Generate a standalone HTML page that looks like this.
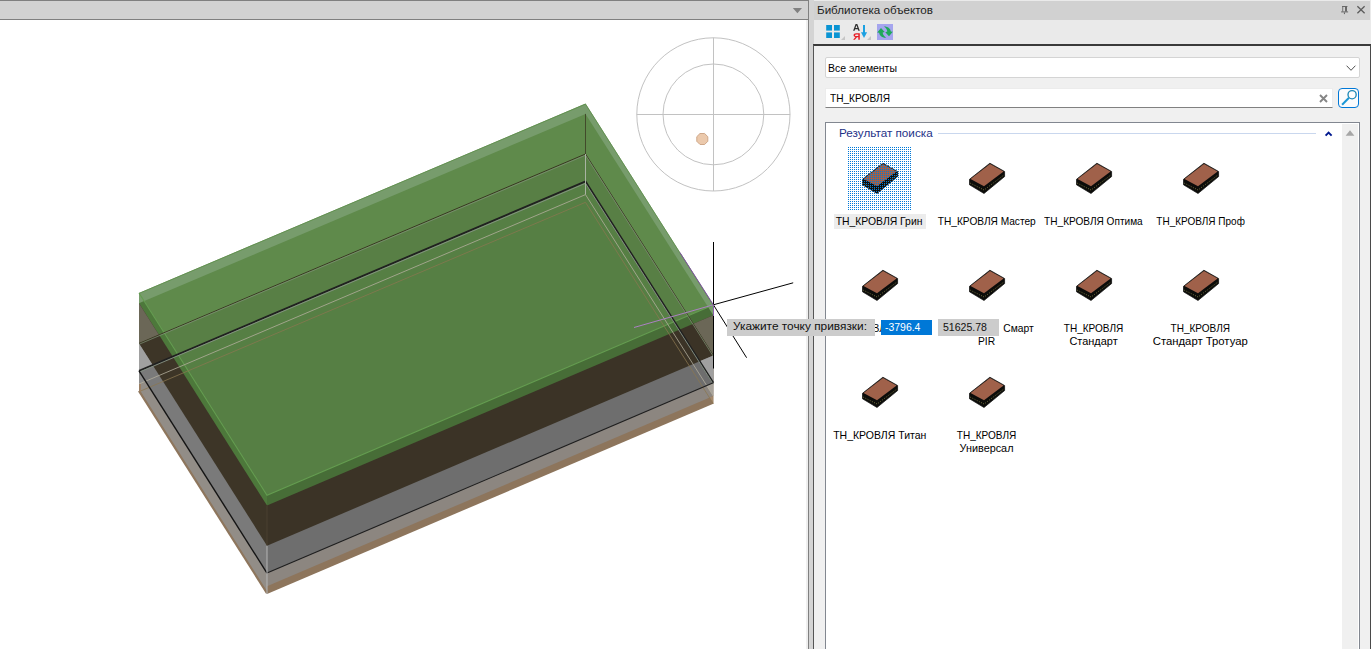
<!DOCTYPE html>
<html><head><meta charset="utf-8"><title>UI</title>
<style>
html,body{margin:0;padding:0;}
body{width:1371px;height:649px;overflow:hidden;background:#fff;position:relative;font-family:"Liberation Sans",sans-serif;color:#000;}
.abs{position:absolute;}
#vp{position:absolute;left:0;top:0;width:809px;height:649px;background:#fff;overflow:hidden;}
#vpbar{position:absolute;left:0;top:0;width:808px;height:20px;background:#d2d2d2;border-top:1px solid #808080;border-bottom:1px solid #808080;box-sizing:border-box;}
#split{position:absolute;left:806px;top:0;width:8px;height:649px;}
#panel{position:absolute;left:814px;top:0;width:557px;height:649px;background:#eaeaea;}
#ptitle{position:absolute;left:0;top:1px;width:556px;height:19px;background:#d1d1d1;}
.t{position:absolute;white-space:nowrap;transform-origin:0 0;line-height:1;}
#inner{position:absolute;left:813px;top:44px;width:558px;height:620px;box-sizing:border-box;border:2px solid #3a3a3a;border-left:1px solid #555;border-right:1px solid #4a4a4a;background:#f0f0f0;}
#combo{position:absolute;left:825px;top:57px;width:535px;height:21px;box-sizing:border-box;border:1px solid #d4d4d4;border-radius:2px;background:#fff;}
#search{position:absolute;left:825px;top:88px;width:508px;height:20px;box-sizing:border-box;border:1px solid #ececec;border-bottom:1px solid #808080;background:#fff;}
#sbtn{position:absolute;left:1338px;top:88px;width:21px;height:20px;box-sizing:border-box;border:1.2px solid #0078d7;border-radius:4px;background:#fbfbfc;}
#list{position:absolute;left:825px;top:122px;width:535px;height:540px;box-sizing:border-box;border:1px solid #828790;background:#fff;}
#sb{position:absolute;left:1341px;top:124px;width:17px;height:540px;background:#f0f0f0;border-left:1px solid #fff;box-sizing:border-box;}
.cell{position:absolute;width:64px;height:64px;}
.cell svg{position:absolute;left:0;top:0;}
.dots{position:absolute;left:0;top:0;width:64px;height:64px;z-index:3;}
.lab{position:absolute;width:120px;text-align:center;font-size:10.3px;line-height:13px;white-space:nowrap;}
.lab span{display:inline-block;padding:1px 2px 1px 2px;}
.lab.sel span{background:#ececec;padding-right:3px;margin-left:1px;}
.lab i{visibility:hidden;font-style:normal;}
.ln{transform-origin:50% 50%;}
</style></head><body>
<div id="vp">
<svg class="abs" style="left:0;top:0" width="808" height="649" viewBox="0 0 808 649">
<defs><clipPath id="cpTop"><polygon points="139.0,293.0 585.5,103.6 713.3,305.0 267.0,495.3"/></clipPath></defs>
<polygon points="139.0,293.0 585.5,103.6 713.3,305.0 267.0,495.3" fill="#779c6c" />
<g clip-path="url(#cpTop)">
<polygon points="139.0,303.3 585.5,113.9 713.3,315.3 267.0,505.6" fill="#5f8a4b" />
<polygon points="139.0,343.4 585.5,154.0 713.3,355.4 267.0,545.7" fill="#587f45" />
<polygon points="139.0,370.8 585.5,181.4 713.3,382.8 267.0,573.1" fill="#567f44" />
</g>
<polygon points="139.0,293.0 267.0,495.3 267.0,594.0 139.0,391.7" fill="#928d87" />
<polygon points="139.0,293.0 267.0,495.3 267.0,573.1 139.0,370.8" fill="#7a7a7a" />
<polygon points="139.0,293.0 267.0,495.3 267.0,545.7 139.0,343.4" fill="#3d3527" />
<polygon points="139.0,293.0 267.0,495.3 267.0,505.6 139.0,303.3" fill="#4d783b" />
<polygon points="139.0,370.8 145.6,381.2 139.0,384.0" fill="#8c8c8c" />
<polygon points="139.0,343.4 152.7,365.0 139.0,370.8" fill="#a0a0a0" />
<polygon points="139.0,303.3 159.0,334.9 139.0,343.4" fill="#6b6757" />
<polygon points="139.0,293.0 144.1,301.1 139.0,303.3" fill="#779c6c" />
<polygon points="267.0,495.3 713.3,305.0 713.3,403.7 267.0,594.0" fill="#8d755c" />
<polygon points="267.0,495.3 713.3,305.0 713.3,396.0 267.0,586.3" fill="#8c8680" />
<polygon points="267.0,495.3 713.3,305.0 713.3,382.8 267.0,573.1" fill="#6e6e6e" />
<polygon points="267.0,495.3 713.3,305.0 713.3,355.4 267.0,545.7" fill="#3b3326" />
<polygon points="267.0,495.3 713.3,305.0 713.3,315.3 267.0,505.6" fill="#476d37" />
<polygon points="713.3,396.0 713.3,403.7 709.5,397.6" fill="#a58a6e" />
<polygon points="713.3,382.8 713.3,396.0 706.7,385.6" fill="#a9a49c" />
<polygon points="713.3,355.4 713.3,382.8 699.6,361.2" fill="#a0a0a0" />
<polygon points="713.3,315.3 713.3,355.4 693.3,323.8" fill="#6b6757" />
<polygon points="713.3,305.0 713.3,315.3 708.2,307.2" fill="#779c6c" />
<polyline points="139.0,293.4 585.5,104.1 713.3,305.4" fill="none" stroke="#5f8f4c" stroke-width="0.9" stroke-linejoin="miter" />
<polyline points="139.0,293.0 267.0,495.3 713.3,305.0" fill="none" stroke="#649e50" stroke-width="1.1" stroke-linejoin="miter" />
<polyline points="139.0,343.4 585.5,154.0 713.3,355.4" fill="none" stroke="#3a3822" stroke-width="1" stroke-linejoin="miter" />
<polyline points="139.0,344.3 585.5,155.2 713.3,356.3" fill="none" stroke="#84967c" stroke-width="0.8" stroke-linejoin="miter" opacity="0.85"/>
<polyline points="139.0,370.8 585.5,181.4 713.3,382.8" fill="none" stroke="#202020" stroke-width="1.8" stroke-linejoin="miter" />
<polyline points="139.0,372.2 585.5,183.3 713.3,384.2" fill="none" stroke="#879386" stroke-width="1" stroke-linejoin="miter" opacity="0.9"/>
<polyline points="139.0,384.0 585.5,194.6 713.3,396.0" fill="none" stroke="#b3ae9c" stroke-width="1" stroke-linejoin="miter" opacity="0.8"/>
<polyline points="139.0,391.7 585.5,202.3 713.3,403.7" fill="none" stroke="#8a7650" stroke-width="0.9" stroke-linejoin="miter" opacity="0.85"/>
<line x1="585.5" y1="113.9" x2="585.5" y2="154.0" stroke="#3a3822" stroke-width="0.9" opacity="0.85"/>
<line x1="585.5" y1="154.0" x2="585.5" y2="194.6" stroke="#a9b3a2" stroke-width="1" />
<polyline points="139.0,370.8 267.0,573.1" fill="none" stroke="#141414" stroke-width="1.4" stroke-linejoin="miter" />
<polyline points="267.0,573.1 713.3,382.8" fill="none" stroke="#1e1e1e" stroke-width="1.1" stroke-linejoin="miter" />
<polyline points="139.0,390.9 267.0,593.2" fill="none" stroke="#8e765d" stroke-width="2.2" stroke-linejoin="miter" />
<line x1="267.0" y1="505.6" x2="267.0" y2="545.7" stroke="#4a4130" stroke-width="1" />
<line x1="267.0" y1="545.7" x2="267.0" y2="594.0" stroke="#b4b4b4" stroke-width="1" />
<line x1="140.0" y1="384.0" x2="140.0" y2="391.7" stroke="#9a7e62" stroke-width="2" />
<!-- compass -->
<g fill="none" stroke="#c2c2c2" stroke-width="1">
<circle cx="713.4" cy="114.4" r="76.6"/><circle cx="713.4" cy="114.4" r="50.4"/>
<line x1="636.6" y1="114.5" x2="790.2" y2="114.5"/><line x1="713.5" y1="37.6" x2="713.5" y2="191"/>
</g>
<polygon points="700,133.5 704.6,133.5 707.8,136.7 707.8,141.3 704.6,144.5 700,144.5 696.8,141.3 696.8,136.7" fill="#ebc9ac" stroke="#cfa88a" stroke-width="1"/>
<!-- crosshair -->
<g stroke="#000" stroke-width="1" fill="none">
<line x1="713.5" y1="242" x2="713.5" y2="368.5"/>
<line x1="713.4" y1="304.8" x2="793.2" y2="282.8"/>
<line x1="713.4" y1="304.8" x2="746.6" y2="357.7"/>
</g>
<g stroke-width="1" fill="none">
<line x1="713.4" y1="304.8" x2="634" y2="327.5" stroke="#ab80c2"/>
<line x1="713.4" y1="304.8" x2="680" y2="252.6" stroke="#7f52a2"/>
<line x1="713.5" y1="305" x2="713.5" y2="316" stroke="#8a60a8"/>
</g>
</svg>
<div id="vpbar"></div>
<svg class="abs" style="left:790px;top:6px" width="14" height="9"><polygon points="2.8,2 12,2 7.4,7.2" fill="#808080"/></svg>
</div>
<div id="split"><div class="abs" style="left:0;top:20px;width:2px;height:629px;background:#efefef"></div><div class="abs" style="left:2px;top:0;width:1px;height:649px;background:#808080"></div><div class="abs" style="left:3px;top:0;width:5px;height:649px;background:#d4d4d4"></div></div>
<div id="panel"><div id="ptitle"></div></div>
<div class="t" style="left:816.8px;top:4.5px;font-size:11px;transform:scaleX(1.057);color:#1e1e1e">Библиотека объектов</div>
<!-- pin / close -->
<svg class="abs" style="left:1338px;top:4px" width="30" height="12" viewBox="0 0 30 12">
<g fill="#686868"><rect x="4" y="2" width="5.4" height="1"/><rect x="4.3" y="2" width="0.9" height="5.6"/><rect x="7" y="2" width="2" height="5.6"/><rect x="3.1" y="7.4" width="7" height="1"/><rect x="5.9" y="8.4" width="1.1" height="1.7"/></g>
<g stroke="#5a5a5a" fill="none" stroke-width="1.25"><path d="M19.4,2.2 L26.6,9.2 M26.6,2.2 L19.4,9.2"/></g>
</svg>
<!-- toolbar icons -->
<svg class="abs" style="left:824px;top:22px" width="72" height="20" viewBox="0 0 72 20">
<g fill="#0a94d3"><rect x="2.2" y="3" width="5.8" height="5.6"/><rect x="10" y="3" width="5.8" height="5.6"/><rect x="2.2" y="10.4" width="5.8" height="5.6"/><rect x="10" y="10.4" width="5.8" height="5.6"/></g>
<polygon points="17,18 21,18 21,14" fill="#c6c6c6"/>
<polygon points="43,18 47,18 47,14" fill="#c6c6c6"/>
<path fill-rule="evenodd" fill="#303030" d="M29.1,8.7 L31.6,2 L33.3,2 L35.8,8.7 L34.3,8.7 L33.8,7.2 L31.1,7.2 L30.6,8.7 Z M31.5,6 L33.4,6 L32.45,3.3 Z"/>
<path fill-rule="evenodd" fill="#e81c24" d="M35.8,11.3 L35.8,17.8 L34.3,17.8 L34.3,15.3 L33,15.3 L30.9,17.8 L29.1,17.8 L31.5,15.1 C30.3,14.8 29.6,14.2 29.6,13.2 C29.6,12 30.6,11.3 32.2,11.3 Z M34.3,12.5 L32.4,12.5 C31.5,12.5 31.1,12.8 31.1,13.3 C31.1,13.9 31.5,14.1 32.4,14.1 L34.3,14.1 Z"/>
<rect x="39" y="3" width="2" height="9" fill="#1ba1e2"/><polygon points="37,10.3 43.1,10.3 40,15.9" fill="#1ba1e2"/>
<rect x="53" y="2" width="16" height="16" fill="#a5a5ee"/>
<g fill="#1fa95a" transform="translate(53,2)"><path d="M0.2,8.4 L4,3.9 L7.7,7.9 L5.7,8.6 C5.8,10.6 7,12.4 9.2,13.7 C5.4,14 2.4,11.6 2.2,8.7 Z"/>
<path d="M15.8,7.8 L12,12.3 L8.3,8.3 L10.3,7.6 C10.2,5.6 9,3.8 6.8,2.5 C10.6,2.2 13.6,4.6 13.8,7.5 Z"/></g>
</svg>
<div id="inner"></div>
<div id="combo"></div>
<div class="t" style="left:828px;top:64.1px;font-size:10.45px;">Все элементы</div>
<svg class="abs" style="left:1344px;top:63px" width="14" height="10"><path d="M2.6,2.7 L7,7.3 L11.4,2.7" fill="none" stroke="#505050" stroke-width="1"/></svg>
<div id="search"></div>
<div class="t" style="left:830.3px;top:93.9px;font-size:10.3px;transform:scaleX(0.983)">ТН_КРОВЛЯ</div>
<svg class="abs" style="left:1318px;top:93px" width="11" height="11"><path d="M2,2 L9,9 M9,2 L2,9" stroke="#858585" stroke-width="1.9" fill="none"/></svg>
<div id="sbtn"></div>
<svg class="abs" style="left:1339px;top:88px" width="20" height="20" viewBox="0 0 20 20"><line x1="10" y1="9.8" x2="3.1" y2="16.7" stroke="#1b97d6" stroke-width="2"/><circle cx="13.1" cy="6.7" r="4.1" fill="#fdfdfd" stroke="#1e88b6" stroke-width="1.35"/></svg>
<div id="list"></div>
<div id="sb"></div>
<svg class="abs" style="left:1345px;top:129px" width="10" height="8"><polygon points="0.6,6.8 9.4,6.8 5,1.2" fill="#a6a6a6"/></svg>
<div class="t" style="left:838.6px;top:127.85px;font-size:11.4px;transform:scaleX(1.028);color:#1e3287">Результат поиска</div>
<div class="abs" style="left:938px;top:133px;width:378px;height:1px;background:#c9d7ee"></div>
<svg class="abs" style="left:1323px;top:129px" width="11" height="9"><path d="M2.6,6.6 L5.6,3.6 L8.6,6.6" fill="none" stroke="#00188f" stroke-width="1.9"/></svg>
<div class="cell" style="left:847px;top:146px"><svg class="th" width="64" height="64" viewBox="0 0 64 64">
<polygon points="15.5,33.3 35.9,17.2 50.6,25.5 50.6,30.6 30,47.5 15.5,38.8" fill="#0c0c0a" stroke="#0c0c0a" stroke-width="0.7" stroke-linejoin="round"/>
<polygon points="16.5,32.9 36,17.9 49.6,25.6 30,40.2" fill="#a0614a"/>
<polyline points="16.3,37.2 30.1,44 50.2,28.8" fill="none" stroke="#a8a858" stroke-width="0.7" stroke-dasharray="0.9 1.5"/>
</svg><svg class="dots" width="64" height="64" viewBox="0 0 64 64" shape-rendering="crispEdges"><defs><pattern id="dp" x="0" y="0" width="2" height="2" patternUnits="userSpaceOnUse"><rect x="1" y="1" width="1" height="1" fill="#0078d7"/></pattern></defs><rect width="64" height="64" fill="url(#dp)"/></svg></div>
<div class="lab sel" style="left:819.5px;top:214px"><span><div class="ln" style="transform:scaleX(1.008)">ТН_КРОВЛЯ Грин</div></span></div>
<div class="cell" style="left:954px;top:146px"><svg class="th" width="64" height="64" viewBox="0 0 64 64">
<polygon points="15.5,33.3 35.9,17.2 50.6,25.5 50.6,30.6 30,47.5 15.5,38.8" fill="#0c0c0a" stroke="#0c0c0a" stroke-width="0.7" stroke-linejoin="round"/>
<polygon points="16.5,32.9 36,17.9 49.6,25.6 30,40.2" fill="#a0614a"/>
<polyline points="16.3,37.2 30.1,44 50.2,28.8" fill="none" stroke="#a8a858" stroke-width="0.7" stroke-dasharray="0.9 1.5"/>
</svg></div>
<div class="lab" style="left:926.5px;top:214px"><span><div class="ln" style="transform:scaleX(0.984)">ТН_КРОВЛЯ Мастер</div></span></div>
<div class="cell" style="left:1061px;top:146px"><svg class="th" width="64" height="64" viewBox="0 0 64 64">
<polygon points="15.5,33.3 35.9,17.2 50.6,25.5 50.6,30.6 30,47.5 15.5,38.8" fill="#0c0c0a" stroke="#0c0c0a" stroke-width="0.7" stroke-linejoin="round"/>
<polygon points="16.5,32.9 36,17.9 49.6,25.6 30,40.2" fill="#a0614a"/>
<polyline points="16.3,37.2 30.1,44 50.2,28.8" fill="none" stroke="#a8a858" stroke-width="0.7" stroke-dasharray="0.9 1.5"/>
</svg></div>
<div class="lab" style="left:1033.5px;top:214px"><span><div class="ln" style="transform:scaleX(0.978)">ТН_КРОВЛЯ Оптима</div></span></div>
<div class="cell" style="left:1168px;top:146px"><svg class="th" width="64" height="64" viewBox="0 0 64 64">
<polygon points="15.5,33.3 35.9,17.2 50.6,25.5 50.6,30.6 30,47.5 15.5,38.8" fill="#0c0c0a" stroke="#0c0c0a" stroke-width="0.7" stroke-linejoin="round"/>
<polygon points="16.5,32.9 36,17.9 49.6,25.6 30,40.2" fill="#a0614a"/>
<polyline points="16.3,37.2 30.1,44 50.2,28.8" fill="none" stroke="#a8a858" stroke-width="0.7" stroke-dasharray="0.9 1.5"/>
</svg></div>
<div class="lab" style="left:1140.5px;top:214px"><span><div class="ln" style="transform:scaleX(0.97)">ТН_КРОВЛЯ Проф</div></span></div>
<div class="cell" style="left:847px;top:253px"><svg class="th" width="64" height="64" viewBox="0 0 64 64">
<polygon points="15.5,33.3 35.9,17.2 50.6,25.5 50.6,30.6 30,47.5 15.5,38.8" fill="#0c0c0a" stroke="#0c0c0a" stroke-width="0.7" stroke-linejoin="round"/>
<polygon points="16.5,32.9 36,17.9 49.6,25.6 30,40.2" fill="#a0614a"/>
<polyline points="16.3,37.2 30.1,44 50.2,28.8" fill="none" stroke="#a8a858" stroke-width="0.7" stroke-dasharray="0.9 1.5"/>
</svg></div>
<div class="lab" style="left:819.5px;top:321px"><span><div class="ln" style="transform:scaleX(1)">ТН_КРОВЛЯ Смарт</div></span></div>
<div class="cell" style="left:954px;top:253px"><svg class="th" width="64" height="64" viewBox="0 0 64 64">
<polygon points="15.5,33.3 35.9,17.2 50.6,25.5 50.6,30.6 30,47.5 15.5,38.8" fill="#0c0c0a" stroke="#0c0c0a" stroke-width="0.7" stroke-linejoin="round"/>
<polygon points="16.5,32.9 36,17.9 49.6,25.6 30,40.2" fill="#a0614a"/>
<polyline points="16.3,37.2 30.1,44 50.2,28.8" fill="none" stroke="#a8a858" stroke-width="0.7" stroke-dasharray="0.9 1.5"/>
</svg></div>
<div class="lab" style="left:926.5px;top:321px"><span><div class="ln" style="transform:scaleX(1)"><i>ТН_КРОВЛЯ</i> Смарт</div><div class="ln" style="transform:scaleX(1)">PIR</div></span></div>
<div class="cell" style="left:1061px;top:253px"><svg class="th" width="64" height="64" viewBox="0 0 64 64">
<polygon points="15.5,33.3 35.9,17.2 50.6,25.5 50.6,30.6 30,47.5 15.5,38.8" fill="#0c0c0a" stroke="#0c0c0a" stroke-width="0.7" stroke-linejoin="round"/>
<polygon points="16.5,32.9 36,17.9 49.6,25.6 30,40.2" fill="#a0614a"/>
<polyline points="16.3,37.2 30.1,44 50.2,28.8" fill="none" stroke="#a8a858" stroke-width="0.7" stroke-dasharray="0.9 1.5"/>
</svg></div>
<div class="lab" style="left:1033.5px;top:321px"><span><div class="ln" style="transform:scaleX(0.975)">ТН_КРОВЛЯ</div><div class="ln" style="transform:scaleX(1.063)">Стандарт</div></span></div>
<div class="cell" style="left:1168px;top:253px"><svg class="th" width="64" height="64" viewBox="0 0 64 64">
<polygon points="15.5,33.3 35.9,17.2 50.6,25.5 50.6,30.6 30,47.5 15.5,38.8" fill="#0c0c0a" stroke="#0c0c0a" stroke-width="0.7" stroke-linejoin="round"/>
<polygon points="16.5,32.9 36,17.9 49.6,25.6 30,40.2" fill="#a0614a"/>
<polyline points="16.3,37.2 30.1,44 50.2,28.8" fill="none" stroke="#a8a858" stroke-width="0.7" stroke-dasharray="0.9 1.5"/>
</svg></div>
<div class="lab" style="left:1140.5px;top:321px"><span><div class="ln" style="transform:scaleX(0.975)">ТН_КРОВЛЯ</div><div class="ln" style="transform:scaleX(1.099)">Стандарт Тротуар</div></span></div>
<div class="cell" style="left:847px;top:360px"><svg class="th" width="64" height="64" viewBox="0 0 64 64">
<polygon points="15.5,33.3 35.9,17.2 50.6,25.5 50.6,30.6 30,47.5 15.5,38.8" fill="#0c0c0a" stroke="#0c0c0a" stroke-width="0.7" stroke-linejoin="round"/>
<polygon points="16.5,32.9 36,17.9 49.6,25.6 30,40.2" fill="#a0614a"/>
<polyline points="16.3,37.2 30.1,44 50.2,28.8" fill="none" stroke="#a8a858" stroke-width="0.7" stroke-dasharray="0.9 1.5"/>
</svg></div>
<div class="lab" style="left:819.5px;top:428px"><span><div class="ln" style="transform:scaleX(1.018)">ТН_КРОВЛЯ Титан</div></span></div>
<div class="cell" style="left:954px;top:360px"><svg class="th" width="64" height="64" viewBox="0 0 64 64">
<polygon points="15.5,33.3 35.9,17.2 50.6,25.5 50.6,30.6 30,47.5 15.5,38.8" fill="#0c0c0a" stroke="#0c0c0a" stroke-width="0.7" stroke-linejoin="round"/>
<polygon points="16.5,32.9 36,17.9 49.6,25.6 30,40.2" fill="#a0614a"/>
<polyline points="16.3,37.2 30.1,44 50.2,28.8" fill="none" stroke="#a8a858" stroke-width="0.7" stroke-dasharray="0.9 1.5"/>
</svg></div>
<div class="lab" style="left:926.5px;top:428px"><span><div class="ln" style="transform:scaleX(0.975)">ТН_КРОВЛЯ</div><div class="ln" style="transform:scaleX(1.052)">Универсал</div></span></div>
<!-- tooltip & inputs -->
<div class="abs" style="left:727px;top:319px;width:148px;height:17px;background:#cccccc"></div>
<div class="t" style="left:733.2px;top:320.7px;font-size:11.3px;transform:scaleX(1.05);color:#111">Укажите точку привязки:</div>
<div class="abs" style="left:881px;top:320px;width:51px;height:15px;background:#0078d7"></div>
<div class="t" style="left:884.7px;top:321.8px;font-size:10.6px;transform:scaleX(0.985);color:#fff">-3796.4</div>
<div class="abs" style="left:938px;top:319px;width:61px;height:17px;background:#cccccc"></div>
<div class="t" style="left:942.7px;top:321.8px;font-size:10.6px;transform:scaleX(0.995);color:#111">51625.78</div>
</body></html>
